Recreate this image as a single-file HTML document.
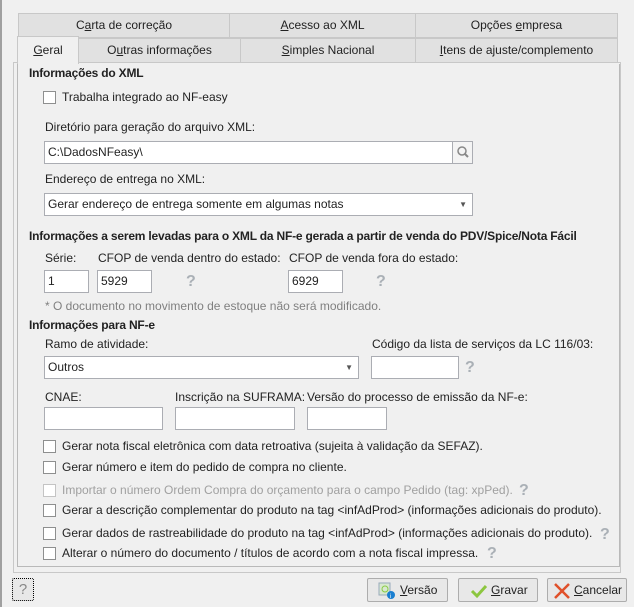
<!DOCTYPE html>
<html><head><meta charset="utf-8"><style>
*{box-sizing:border-box}
body{margin:0;width:634px;height:607px;background:#f0f0f0;font-family:"Liberation Sans",sans-serif;font-size:12px;color:#222;position:relative;overflow:hidden}
.a{position:absolute;white-space:nowrap}
.tab{position:absolute;background:#e1e1e1;border:1px solid #c8c8c8;text-align:center;line-height:22px;color:#222}
.b{font-weight:bold;letter-spacing:-0.2px}
.in{position:absolute;background:#fff;border:1px solid #abadb3;height:23px;line-height:21px;padding-left:3px}
.cb{position:absolute;width:13px;height:13px;border:1px solid #8e8f8f;background:#fff}
.q{position:absolute;color:#aab0b6;font-size:16px;font-weight:bold}
.btn{position:absolute;height:24px;border:1px solid #adadad;background:#e8e8e8;border-radius:2px;line-height:22px}
u{text-decoration:underline}
</style></head><body>
<div class="a" style="left:0;top:0;width:2px;height:607px;background:#a0a0a0"></div>
<div class="tab" style="left:18px;top:13px;width:212px;height:25px">C<u>a</u>rta de correção</div>
<div class="tab" style="left:229px;top:13px;width:187px;height:25px"><u>A</u>cesso ao XML</div>
<div class="tab" style="left:415px;top:13px;width:203px;height:25px">Opções <u>e</u>mpresa</div>
<div class="tab" style="left:78px;top:38px;width:163px;height:25px">O<u>u</u>tras informações</div>
<div class="tab" style="left:240px;top:38px;width:176px;height:25px"><u>S</u>imples Nacional</div>
<div class="tab" style="left:415px;top:38px;width:203px;height:25px"><u>I</u>tens de ajuste/complemento</div>
<div class="a" style="left:13px;top:62px;width:608px;height:511px;border:1px solid #c8c8c8;background:#f0f0f0"></div>
<div class="a" style="left:17px;top:64px;width:603px;height:503px;border:1px solid #b9b9b9;border-top:none"></div>
<div class="tab" style="left:17px;top:36px;width:62px;height:28px;background:#f0f0f0;border-bottom:none;line-height:26px"><u>G</u>eral</div>

<div class="a b" style="left:29px;top:66px">Informações do XML</div>
<div class="cb" style="left:43px;top:91px"></div><div class="a" style="left:62px;top:90px">Trabalha integrado ao NF-easy</div>
<div class="a" style="left:45px;top:120px">Diretório para geração do arquivo XML:</div>
<div class="in" style="left:44px;top:141px;width:409px">C:\DadosNFeasy\</div>
<div class="a" style="left:452px;top:141px;width:21px;height:23px;border:1px solid #abadb3;background:#f4f4f4"><svg width="19" height="21"><circle cx="9" cy="9" r="4" fill="none" stroke="#888" stroke-width="1.5"/><line x1="12" y1="12" x2="15" y2="15" stroke="#888" stroke-width="2"/></svg></div>
<div class="a" style="left:45px;top:172px">Endereço de entrega no XML:</div>
<div class="in" style="left:44px;top:193px;width:429px">Gerar endereço de entrega somente em algumas notas<span style="position:absolute;right:5px;top:0;font-size:8px;color:#555">▼</span></div>
<div class="a b" style="left:29px;top:229px">Informações a serem levadas para o XML da NF-e gerada a partir de venda do PDV/Spice/Nota Fácil</div>
<div class="a" style="left:45px;top:251px">Série:</div>
<div class="a" style="left:98px;top:251px">CFOP de venda dentro do estado:</div>
<div class="a" style="left:289px;top:251px">CFOP de venda fora do estado:</div>
<div class="in" style="left:44px;top:270px;width:45px">1</div>
<div class="in" style="left:97px;top:270px;width:55px">5929</div>
<div class="q" style="left:186px;top:273px">?</div>
<div class="in" style="left:288px;top:270px;width:55px">6929</div>
<div class="q" style="left:376px;top:273px">?</div>
<div class="a" style="left:45px;top:299px;color:#808080">* O documento no movimento de estoque não será modificado.</div>
<div class="a b" style="left:29px;top:318px">Informações para NF-e</div>
<div class="a" style="left:45px;top:337px">Ramo de atividade:</div>
<div class="a" style="left:372px;top:337px">Código da lista de serviços da LC 116/03:</div>
<div class="in" style="left:44px;top:356px;width:315px">Outros<span style="position:absolute;right:5px;top:0;font-size:8px;color:#555">▼</span></div>
<div class="in" style="left:371px;top:356px;width:88px"></div>
<div class="q" style="left:465px;top:359px">?</div>
<div class="a" style="left:45px;top:390px">CNAE:</div>
<div class="a" style="left:175px;top:390px">Inscrição na SUFRAMA:</div>
<div class="a" style="left:307px;top:390px">Versão do processo de emissão da NF-e:</div>
<div class="in" style="left:44px;top:407px;width:119px"></div>
<div class="in" style="left:175px;top:407px;width:120px"></div>
<div class="in" style="left:307px;top:407px;width:80px"></div>

<div class="cb" style="left:43px;top:440px"></div><div class="a" style="left:62px;top:439px">Gerar nota fiscal eletrônica com data retroativa (sujeita à validação da SEFAZ).</div>
<div class="cb" style="left:43px;top:461px"></div><div class="a" style="left:62px;top:460px">Gerar número e item do pedido de compra no cliente.</div>
<div class="cb" style="left:43px;top:484px;border-color:#c4c4c4"></div><div class="a" style="left:62px;top:483px;color:#a0a0a0">Importar o número Ordem Compra do orçamento para o campo Pedido (tag: xpPed).</div>
<div class="q" style="left:519px;top:482px">?</div>
<div class="cb" style="left:43px;top:504px"></div><div class="a" style="left:62px;top:503px">Gerar a descrição complementar do produto na tag &lt;infAdProd&gt; (informações adicionais do produto).</div>
<div class="cb" style="left:43px;top:527px"></div><div class="a" style="left:62px;top:526px">Gerar dados de rastreabilidade do produto na tag &lt;infAdProd&gt; (informações adicionais do produto).</div>
<div class="q" style="left:600px;top:526px">?</div>
<div class="cb" style="left:43px;top:547px"></div><div class="a" style="left:62px;top:546px">Alterar o número do documento / títulos de acordo com a nota fiscal impressa.</div>
<div class="q" style="left:487px;top:545px">?</div>

<div class="btn" style="left:12px;top:578px;width:22px;height:23px;border:1px dotted #000;text-align:center;color:#888;font-size:15px">?</div>
<div class="btn" style="left:367px;top:578px;width:81px"><svg class="a" style="left:10px;top:3px" width="18" height="18"><rect x="1" y="1" width="11" height="12" fill="#d8e8d0" stroke="#9ab"/><circle cx="7" cy="7" r="3" fill="none" stroke="#8c4"/><circle cx="13" cy="13" r="4" fill="#1a7fd0"/><text x="12" y="16" font-size="6" fill="#fff">i</text></svg><span class="a" style="left:32px"><u>V</u>ersão</span></div>
<div class="btn" style="left:458px;top:578px;width:80px"><svg class="a" style="left:11px;top:4px" width="18" height="16"><path d="M2 8 L7 13 L16 3" fill="none" stroke="#8cc63f" stroke-width="3"/></svg><span class="a" style="left:32px"><u>G</u>ravar</span></div>
<div class="btn" style="left:547px;top:578px;width:80px"><svg class="a" style="left:5px;top:3px" width="18" height="18"><path d="M2 2 L16 16 M16 2 L2 16" stroke="#e0502a" stroke-width="2.5"/></svg><span class="a" style="left:26px"><u>C</u>ancelar</span></div>
</body></html>
